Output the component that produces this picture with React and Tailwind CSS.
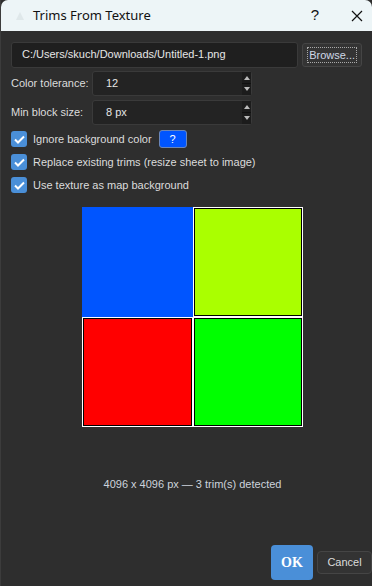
import React from "react";

const font = { fontFamily: '"Liberation Sans", Arial, sans-serif' };

function SpinBox({ value }) {
  return (
    <div className="flex h-[25px] w-[160px] items-stretch rounded-[3px] border border-[#3a3a3a] bg-[#232323]">
      <div className="flex flex-1 items-center pl-[13px] text-[11px] text-[#e6e6e6]">{value}</div>
      <div className="flex w-[9px] flex-col items-center justify-center gap-[3px] bg-[#1c1c1c]">
        <div className="h-0 w-0 border-x-[3px] border-b-[4px] border-x-transparent border-b-[#bbbbbb]" />
        <div className="h-[1px] w-[9px] bg-[#111]" />
        <div className="h-0 w-0 border-x-[3px] border-t-[4px] border-x-transparent border-t-[#bbbbbb]" />
      </div>
    </div>
  );
}

function Check({ label, children }) {
  return (
    <div className="flex h-[16px] items-center gap-[6px]">
      <div className="flex h-[16px] w-[16px] items-center justify-center rounded-[3px] bg-[#4a8fd8]">
        <svg width="11" height="9" viewBox="0 0 11 9">
          <path d="M1 4.5 L4 7.5 L10 1.5" fill="none" stroke="white" strokeWidth="2" />
        </svg>
      </div>
      <span className="whitespace-nowrap text-[11px] text-[#dcdcdc]">{label}</span>
      {children}
    </div>
  );
}

export default function App() {
  return (
    <div style={font} className="flex h-[586px] w-[372px] flex-col bg-[#2e2e2e] border-l border-[#3c3c3c]">
      {/* title bar */}
      <div className="flex h-[31px] items-center rounded-t-[7px] bg-[#edf5f7] pl-[14px] text-[13px] text-[#111]">
        <svg width="10" height="10" viewBox="0 0 10 10" className="mr-[8px]">
          <path d="M5 1 L9 9 L1 9 Z" fill="#dfe8ea" />
        </svg>
        <span style={{ fontFamily: '"Noto Sans", sans-serif' }}>Trims From Texture</span>
        <span className="ml-auto mr-[31px] text-[15px]">?</span>
        <svg width="14" height="14" viewBox="0 0 14 14" className="mr-[8px]">
          <path d="M2 2 L12 12 M12 2 L2 12" stroke="#111" strokeWidth="1.2" />
        </svg>
      </div>

      <div className="flex flex-1 flex-col px-[10px] pt-[10px]">
        {/* file row */}
        <div className="flex h-[27px] items-center gap-[4px]">
          <div className="flex h-[26px] w-[288px] items-center rounded-[3px] border border-[#3a3a3a] bg-[#1f1f1f] pl-[10px] text-[11px] text-[#e6e6e6]">
            C:/Users/skuch/Downloads/Untitled-1.png
          </div>
          <div className="flex h-[24px] w-[60px] items-center justify-center rounded-[3px] border border-[#454545] bg-[#343434]">
            <span className="border border-dotted border-[#aaaaaa] px-[1px] text-[11px] leading-[14px] text-[#cfd8e6]">Browse...</span>
          </div>
        </div>

        {/* spin rows */}
        <div className="mt-[3px] flex items-center">
          <span className="w-[81px] whitespace-nowrap text-[11px] text-[#dcdcdc]">Color tolerance:</span>
          <SpinBox value="12" />
        </div>
        <div className="mt-[4px] flex items-center">
          <span className="w-[81px] whitespace-nowrap text-[11px] text-[#dcdcdc]">Min block size:</span>
          <SpinBox value="8 px" />
        </div>

        {/* checkboxes */}
        <div className="mt-[6px] flex flex-col gap-[7px]">
          <Check label="Ignore background color">
            <div className="ml-[1px] flex h-[18px] w-[28px] items-center justify-center rounded-[3px] border border-[#6b86b8] bg-[#0055ff] text-[11px] text-white">
              ?
            </div>
          </Check>
          <Check label="Replace existing trims (resize sheet to image)" />
          <Check label="Use texture as map background" />
        </div>

        {/* preview */}
        <div className="mt-[14px] flex justify-center pl-[12px]">
          <div className="grid h-[220px] w-[221px] grid-cols-2 grid-rows-2">
            <div className="bg-[#0055ff]" />
            <div className="border border-white bg-black p-[1px]">
              <div className="h-full w-full bg-[#aaff00]" />
            </div>
            <div className="border border-white bg-black p-[1px]">
              <div className="h-full w-full bg-[#ff0000]" />
            </div>
            <div className="border border-white bg-black p-[1px]">
              <div className="h-full w-full bg-[#00ff00]" />
            </div>
          </div>
        </div>

        <div className="mt-[49px] pl-[12px] text-center text-[11px] text-[#cdd3dc]">
          4096 x 4096 px — 3 trim(s) detected
        </div>

        {/* buttons */}
        <div className="mt-auto mb-[6px] flex items-center justify-end gap-[4px]">
          <div
            className="flex h-[35px] w-[42px] items-center justify-center rounded-[4px] bg-[#4a8fd8] text-[14px] font-bold text-white"
            style={{ fontFamily: '"Liberation Serif", serif' }}
          >
            OK
          </div>
          <div className="mr-[-10px] flex h-[23px] w-[55px] items-center justify-center rounded-[4px] border border-[#454545] bg-[#333333] text-[11px] text-[#dcdcdc]">
            Cancel
          </div>
        </div>
      </div>
    </div>
  );
}
